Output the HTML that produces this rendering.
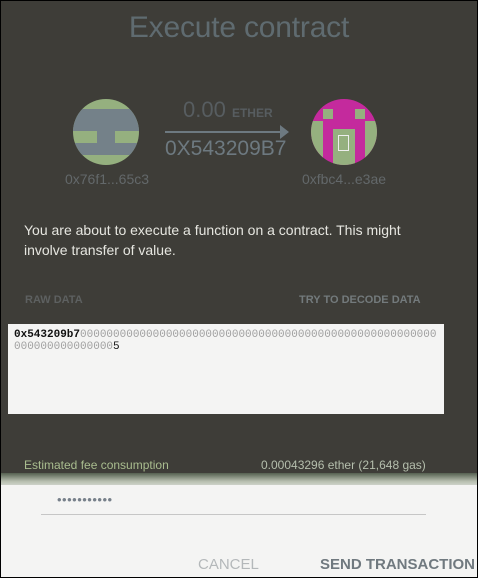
<!DOCTYPE html>
<html><head><meta charset="utf-8"><style>
*{margin:0;padding:0;box-sizing:border-box}
body{width:478px;height:578px;overflow:hidden;background:#000;font-family:"Liberation Sans",sans-serif}
.wrap{position:absolute;left:1px;top:1px;width:476px;height:576px;background:#3e3d38;overflow:hidden}
.t{position:absolute;left:0;width:476px;text-align:center;top:10px;font-size:30px;color:#5f6b70;letter-spacing:-0.2px}
.av{position:absolute;width:66px;height:66px;border-radius:50%;overflow:hidden}
.addr{position:absolute;font-size:14px;color:#63686a;text-align:center;width:140px}
.abs{position:absolute}
</style></head><body><div class="wrap">
<div class="t">Execute contract</div>

<div class="av" style="left:72px;top:98px;background:#95b07f">
 <div class="abs" style="left:0;top:10px;width:66px;height:22px;background:#748189"></div>
 <div class="abs" style="left:24px;top:32px;width:18px;height:12px;background:#748189"></div>
 <div class="abs" style="left:0;top:44px;width:66px;height:12px;background:#748189"></div>
 <div class="abs" style="left:12px;top:32px;width:10px;height:12px;background:#95b07f"></div>
</div>
<div class="addr" style="left:36px;top:170px">0x76f1...65c3</div>

<div class="abs" style="left:182px;top:96px;font-size:22px;color:#575d60">0.00 <span style="font-size:12px;font-weight:bold">ETHER</span></div>
<div class="abs" style="left:164px;top:130px;width:116px;height:2px;background:#6d7980"></div>
<div class="abs" style="left:279px;top:124px;width:0;height:0;border-left:9px solid #6d7980;border-top:7px solid transparent;border-bottom:7px solid transparent"></div>
<div class="abs" style="left:164px;top:136px;font-size:21px;color:#6d7980">0X543209B7</div>

<div class="av" style="left:310px;top:98px;background:#c42a9d">
 <div class="abs" style="left:12px;top:10px;width:10px;height:10px;background:#95b07f"></div>
 <div class="abs" style="left:44px;top:10px;width:10px;height:10px;background:#95b07f"></div>
 <div class="abs" style="left:0;top:22px;width:12px;height:44px;background:#95b07f"></div>
 <div class="abs" style="left:54px;top:22px;width:12px;height:44px;background:#95b07f"></div>
 <div class="abs" style="left:22px;top:30px;width:22px;height:36px;background:#95b07f"></div>
 <div class="abs" style="left:27px;top:36px;width:11px;height:16px;border:1px solid #eee"></div>
</div>
<div class="addr" style="left:273px;top:170px">0xfbc4...e3ae</div>

<div class="abs" style="left:23px;top:219px;font-size:14px;line-height:20px;color:#e6e6e0;width:420px">You are about to execute a function on a contract. This might involve transfer of value.</div>

<div class="abs" style="left:24px;top:293px;font-size:11px;font-weight:bold;color:#5d6060">RAW DATA</div>
<div class="abs" style="left:298px;top:293px;font-size:11px;font-weight:bold;color:#737a7c">TRY TO DECODE DATA</div>

<div class="abs" style="left:7px;top:323px;width:436px;height:90px;background:#f4f4f3;padding:5px 2px 5px 6px;font-family:'Liberation Mono',monospace;font-size:11px;line-height:12px;word-break:break-all;color:#a0a0a0"><b style="color:#111">0x543209b7</b>000000000000000000000000000000000000000000000000000000000000000000000<span style="color:#111">5</span></div>

<div class="abs" style="left:23px;top:457px;font-size:12px;color:#a9bd8f">Estimated fee consumption</div>
<div class="abs" style="left:260px;top:457px;font-size:12px;color:#b5bfad">0.00043296 ether (21,648 gas)</div>

<div class="abs" style="left:0;top:472px;width:476px;height:14px;background:linear-gradient(#556050,#b8bfb0 60%,#d9dcd6)"></div>
<div class="abs" style="left:0;top:484px;width:476px;height:92px;background:#f4f4f3"></div>
<div class="abs" style="left:56px;top:491px;font-size:13px;color:#77808a;letter-spacing:0.5px">•••••••••••</div>
<div class="abs" style="left:40px;top:513px;width:385px;height:1px;background:#c6c6c6"></div>
<div class="abs" style="left:197px;top:555px;font-size:15px;color:#b4b8ba">CANCEL</div>
<div class="abs" style="left:319px;top:555px;font-size:15px;font-weight:bold;color:#70797f">SEND TRANSACTION</div>
</div></body></html>
